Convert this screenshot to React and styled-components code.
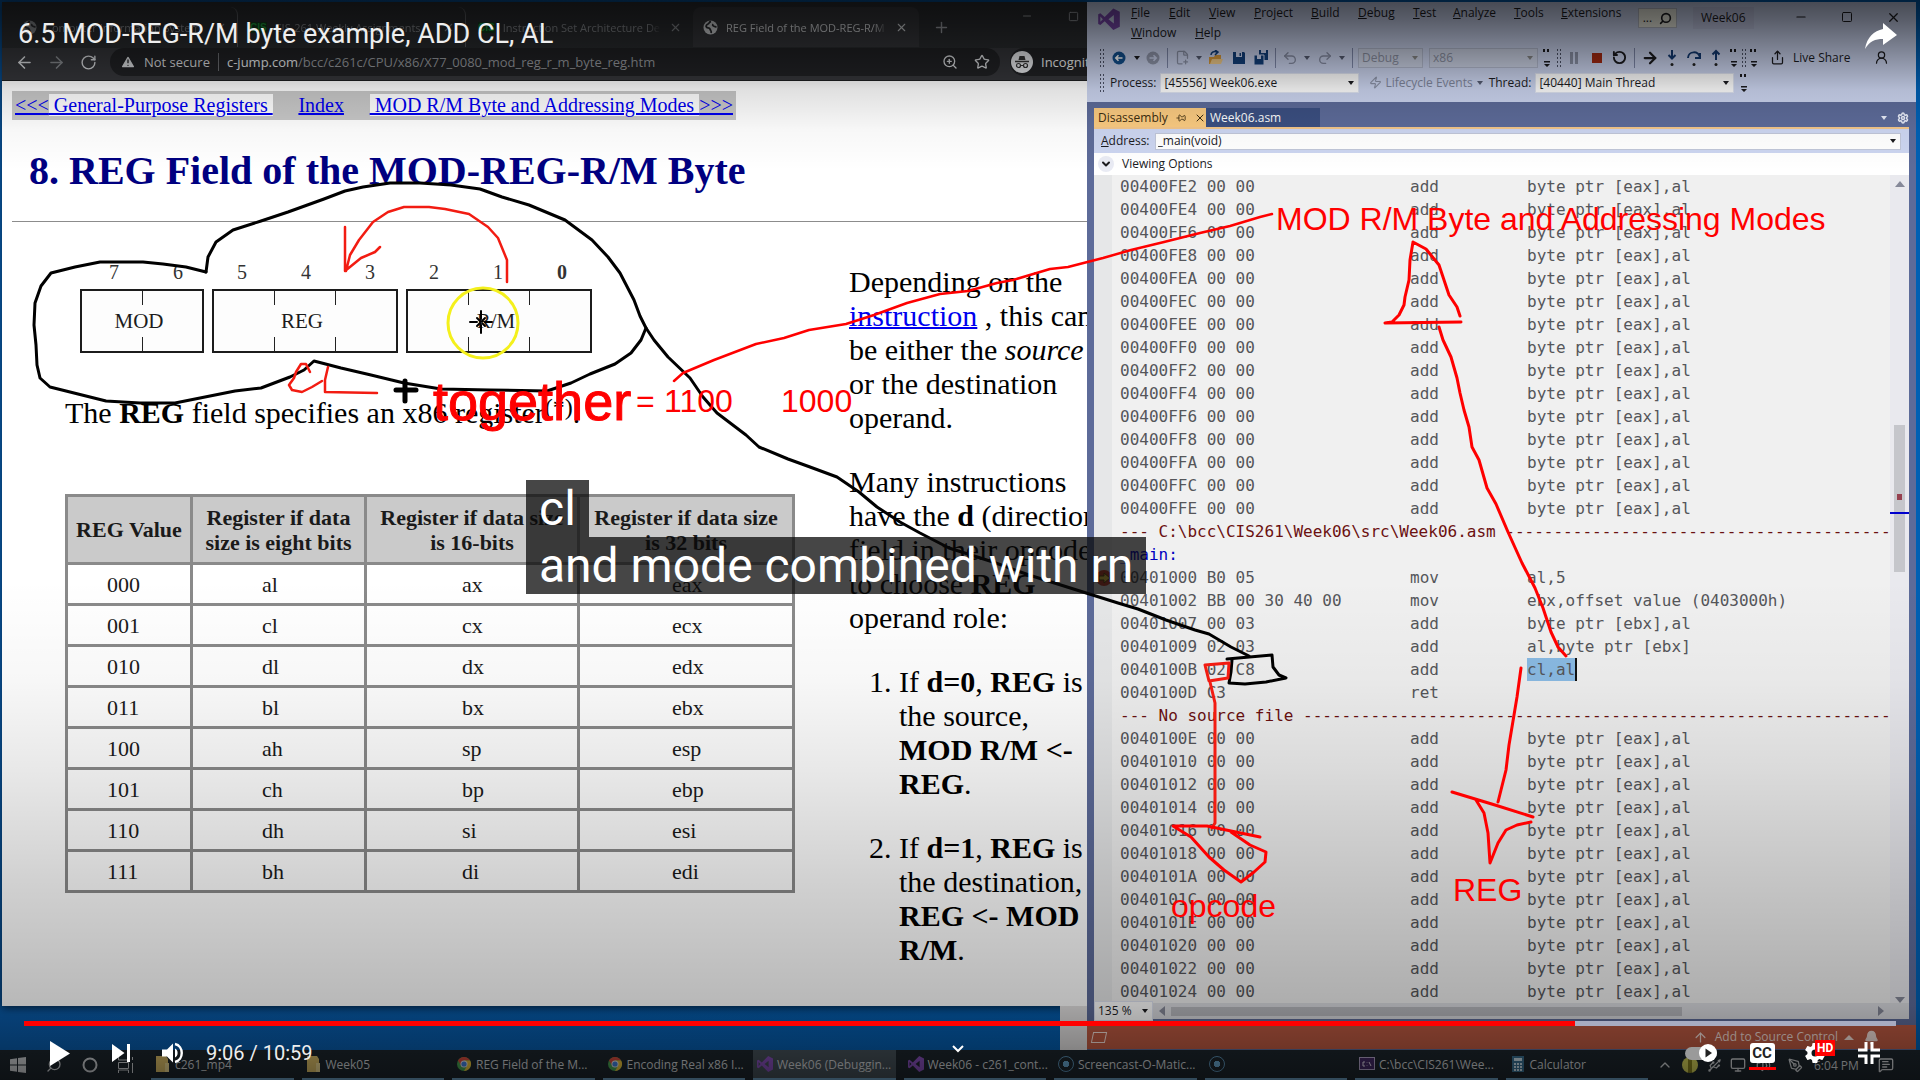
import React from "react";
import styled, { createGlobalStyle } from "styled-components";
import {
  ArrowLeft, ArrowRight, RotateCw, TriangleAlert, ZoomIn, Star, X, Plus, Minus, Square,
  Undo2, Redo2, Search, Pin, Settings, ChevronUp, ChevronDown, Share, MessageSquareText,
  Monitor, Usb, PenTool, Volume2, UserRound, Bell, ArrowUp, FilePlus2, Zap,
} from "lucide-react";

const ui = `"Open Sans", "Noto Sans", sans-serif`;
const serif = `"Liberation Serif", "Times New Roman", serif`;
const arial = `"Liberation Sans", Arial, sans-serif`;
const roboto = `Roboto, "Liberation Sans", sans-serif`;
const mono = `"DejaVu Sans Mono", monospace`;

const Global = createGlobalStyle`
  *, *::before, *::after { box-sizing: border-box; }
  body { margin: 0; overflow: hidden; background: #00427f; }
  button, select, input { font: inherit; color: inherit; margin: 0; padding: 0; border: 0; background: none; border-radius: 0; }
  svg { display: block; flex: none; }
`;

/* ---------- stage ---------- */
const Stage = styled.main`
  position: relative;
  display: grid;
  grid-template-rows: minmax(0, 1fr) 30px;
  height: 100vh;
  font-family: ${ui};
`;
const Desktop = styled.div`
  display: grid;
  grid-template-columns: minmax(0, 1085fr) minmax(0, 829fr);
  padding: 2px 4px 0 2px;
  background: linear-gradient(90deg, #0a5cab 0, #0060b4 100%);
  min-height: 0;
`;
const Layer = styled.div`
  position: absolute;
  inset: 0;
  pointer-events: none;
`;
const Shade = styled(Layer)`
  background:
    linear-gradient(180deg, rgba(0,0,0,.66) 0, rgba(0,0,0,.56) 20px, rgba(0,0,0,.38) 50px, rgba(0,0,0,.12) 90px, rgba(0,0,0,.03) 130px, transparent 170px),
    linear-gradient(0deg, rgba(0,0,0,.55) 0, rgba(0,0,0,.4) 35px, rgba(0,0,0,.28) 75px, rgba(0,0,0,.19) 190px, rgba(0,0,0,.09) 310px, rgba(0,0,0,.03) 400px, transparent 500px);
`;

/* ---------- browser ---------- */
const BrowserColumn = styled.div`
  display: flex;
  flex-direction: column;
  min-height: 0;
`;
const Browser = styled.section`
  flex: 1;
  min-height: 0;
  display: flex;
  flex-direction: column;
  overflow: hidden;
  background: #fff;
  box-shadow: 0 2px 8px rgba(0, 0, 0, .6);
`;
const Peek = styled.div`
  align-self: flex-end;
  width: 27px;
  height: 44px;
  background: #e4e2e2;
`;
const TabStrip = styled.div`
  display: flex;
  align-items: center;
  height: 46px;
  padding: 4px 0 0 8px;
  background: #2a2c2f;
  color: #9a9da2;
`;
const Tab = styled.div`
  display: flex;
  align-items: center;
  gap: 8px;
  width: ${p => p.$w}px;
  height: 40px;
  padding: 0 10px 0 ${p => (p.$active ? 10 : 12)}px;
  border-radius: 8px 8px 0 0;
  font-size: 11px;
  color: ${p => (p.$active ? "#d6d8db" : "#85888c")};
  background: ${p => (p.$active ? "#35363a" : "transparent")};
  border-right: 1px solid ${p => (p.$line ? "#5a5c60" : "transparent")};
`;
const TabText = styled.span`
  flex: 1;
  min-width: 0;
  overflow: hidden;
  white-space: nowrap;
  mask-image: linear-gradient(90deg, #000 92%, transparent);
`;
const SiteBadge = styled.b`
  font: 700 10px ${arial};
  color: #1d9a3c;
  background: #123a1c;
`;
const IconButton = styled.button`
  display: flex;
  align-items: center;
  justify-content: center;
  flex: none;
  width: ${p => p.$w || 32}px;
  height: ${p => p.$h || 28}px;
  color: ${p => p.$c || "inherit"};
`;
const WindowButtons = styled.div`
  display: flex;
  align-self: flex-start;
  margin-left: auto;
  margin-right: ${p => (p.$tucked ? -9 : 0)}px;
`;
const Toolbar = styled.div`
  display: flex;
  align-items: center;
  height: 33px;
  padding: 0 0 4px 6px;
  background: #35363a;
  border-bottom: 1px solid #1c1d1f;
  color: #d8dadd;
  font-size: 13px;
`;
const AddressPill = styled.div`
  display: flex;
  align-items: center;
  flex: 1;
  height: 28px;
  margin: 0 10px 0 6px;
  padding: 0 2px 0 10px;
  border-radius: 14px;
  background: #202124;
`;
const Secure = styled.span`
  padding: 0 8px 0 8px;
  margin-right: 8px;
  border-right: 1px solid #6a6c70;
  line-height: 18px;
`;
const Url = styled.div`
  flex: 1;
  color: #96999e;
  white-space: nowrap;
  b { font-weight: 400; color: #eceef0; }
`;
const Incognito = styled.div`
  display: flex;
  align-items: center;
  gap: 8px;
  width: 77px;
  height: 28px;
  padding-left: 1px;
  border-radius: 14px 0 0 14px;
  background: #202124;
  overflow: hidden;
  color: #f0f1f2;
`;

/* ---------- page ---------- */
const Page = styled.article`
  flex: 1;
  min-height: 0;
  padding: 10px 0 0 10px;
  overflow: hidden;
  font-family: ${serif};
  color: #000;
`;
const PageNav = styled.nav`
  display: flex;
  align-items: center;
  justify-content: space-between;
  width: 724px;
  height: 29px;
  padding: 0 3px;
  font-size: 20px;
  line-height: 23px;
  background: #c8c8c8;
`;
const PageLink = styled.a`
  color: #0000ee;
  text-decoration: underline;
  text-decoration-thickness: 2px;
  white-space: pre;
  span { background: #fff; }
`;
const Heading = styled.h1`
  margin: 29px 0 28px 17px;
  font-size: 40px;
  line-height: 44px;
  color: #000080;
`;
const Rule = styled.hr`
  margin: 0;
  border: 0;
  border-top: 1px solid #8c8c8c;
`;
const Columns = styled.div`
  display: grid;
  grid-template-columns: minmax(0, 837fr) minmax(0, 238fr);
  font-size: 30px;
  line-height: 34px;
`;
const LeftColumn = styled.div`
  padding: 38px 57px 0 53px;
`;
const Bits = styled.div`
  display: grid;
  grid-template-columns: repeat(8, 64px);
  margin-left: 17px;
  font-size: 20px;
  line-height: 24px;
  text-align: center;
  color: #333;
`;
const Fields = styled.div`
  display: flex;
  gap: 8px;
  margin: 5px 0 0 15px;
`;
const tick = "linear-gradient(#222, #222) no-repeat";
const Field = styled.div`
  display: flex;
  align-items: center;
  justify-content: center;
  width: ${p => p.$bits * 62}px;
  height: 64px;
  padding-right: 6px;
  border: 2px solid #1c1c1c;
  font-size: 21px;
  color: #1c1c1c;
  background: ${p => (p.$bits === 2
    ? `${tick} 50% 0 / 1px 14px, ${tick} 50% 100% / 1px 14px, #fdfdfd`
    : `${tick} 33.3% 0 / 1px 14px, ${tick} 66.7% 0 / 1px 14px, ${tick} 33.3% 100% / 1px 14px, ${tick} 66.7% 100% / 1px 14px, #fdfdfd`)};
`;
const Lead = styled.p`
  margin: 43px 0 0;
  white-space: nowrap;
  sup { font-size: 24px; line-height: 0; vertical-align: 8px; }
`;
const Registers = styled.table`
  width: 100%;
  margin-top: 64px;
  border-collapse: collapse;
  table-layout: fixed;
  border: 3px solid #8a8a8a;
  font-size: 22px;
  line-height: 25px;
  color: #1a1a1a;
  th, td { border: 3px solid #8a8a8a; padding: 0; }
  th { height: 68px; background: #cacaca; text-align: center; }
  td { height: 41px; text-align: left; }
  td:nth-child(1) { padding-left: 39px; }
  td:nth-child(2) { padding-left: 69px; }
  td:nth-child(3) { padding-left: 95px; }
  td:nth-child(4) { padding-left: 92px; }
`;
const RightColumn = styled.div`
  padding-top: 43px;
  white-space: nowrap;
  overflow: hidden;
  p { margin: 0 0 30px; }
  ol { margin: 0; padding-left: 50px; }
  li { margin-bottom: 30px; }
`;

/* ---------- Visual Studio ---------- */
const Studio = styled.section`
  display: flex;
  flex-direction: column;
  min-width: 0;
  min-height: 0;
  overflow: hidden;
  background: #5d6b99;
  color: #1b1b1f;
  font-size: 12px;
  line-height: 16px;
`;
const Shell = styled.header`
  height: 100px;
  flex: none;
  background: #ccd5f0;
`;
const TitleRow = styled.div`
  display: flex;
  height: 43px;
  padding: 1px 0 0 11px;
`;
const Menus = styled.nav`
  display: flex;
  flex-wrap: wrap;
  align-content: flex-start;
  width: 524px;
`;
const MenuButton = styled.button`
  width: ${p => p.$w}px;
  height: 20px;
  padding-left: 11px;
  text-align: left;
  white-space: nowrap;
  &::first-letter { text-decoration: underline; }
`;
const SearchBox = styled.button`
  display: flex;
  align-items: center;
  justify-content: space-around;
  width: 39px;
  height: 20px;
  margin: 5px 16px 0 -6px;
  background: #f0f0e4;
  border: 1px solid #b9bdc8;
`;
const Solution = styled.span`
  height: 22px;
  padding: 3px 8px;
  margin-top: 4px;
  background: #c4cae6;
`;
const ToolRow = styled.div`
  display: flex;
  align-items: center;
  height: ${p => p.$h || 25}px;
  padding-left: 12px;
  white-space: nowrap;
`;
const Grip = styled.i`
  flex: none;
  width: 6px;
  height: 20px;
  background: radial-gradient(circle, #4d5368 1px, transparent 1px) 0 0 / 3px 4px;
`;
const Divider = styled.i`
  flex: none;
  width: 1px;
  height: 20px;
  margin: 0 ${p => p.$m || 3}px;
  background: #7f89ab;
`;
const Caret = styled.i`
  flex: none;
  width: 6px;
  margin: 0 ${p => p.$m || 2}px;
  border: 3px solid transparent;
  border-top: 4px solid ${p => p.$c || "#1b1b1f"};
  border-bottom: 0;
`;
const CaretUp = styled.i`
  border: 5px solid transparent;
  border-bottom: 5px solid #f2ded8;
  border-top: 0;
`;
const Picker = styled.span`
  position: relative;
  display: flex;
  align-items: center;
  flex: none;
  width: ${p => p.$w}px;
  height: 20px;
  margin-right: ${p => p.$mr || 0}px;
  color: ${p => (p.$dim ? "#8b90a2" : "#1b1b1f")};
  background: ${p => (p.$dim ? "#ced5e8" : "#fff")};
  border: 1px solid ${p => (p.$dim ? "#b4bbd0" : "#dfe4f2")};
  select { appearance: none; width: 100%; padding-left: 3px; outline: 0; }
  i { position: absolute; right: 2px; }
`;
const Text = styled.label`
  margin: 0 ${p => p.$r || 0}px 0 ${p => p.$l || 0}px;
  color: ${p => p.$c || "inherit"};
`;
const DocTabs = styled.div`
  display: flex;
  align-items: stretch;
  height: 19px;
  margin: 6px 7px 0;
`;
const DocTab = styled.button`
  display: flex;
  align-items: center;
  gap: 8px;
  width: ${p => p.$w}px;
  padding: 0 4px;
  color: ${p => (p.$active ? "#3c2c10" : "#fff")};
  background: ${p => (p.$active ? "#fbcb81" : "#3b4f81")};
`;
const SidewaysPin = styled(Pin)`
  transform: rotate(90deg);
`;
const DocTools = styled.div`
  display: flex;
  align-items: center;
  gap: 8px;
  margin-left: auto;
  color: #e8ecf8;
`;
const Document = styled.div`
  flex: 1;
  display: flex;
  flex-direction: column;
  min-height: 0;
  margin: 0 7px;
  background: #f0f0f0;
  border-top: 2px solid #f3c68a;
`;
const AddressRow = styled.div`
  display: flex;
  align-items: center;
  gap: 5px;
  height: 24px;
  padding: 0 8px 0 7px;
  background: #ccd5f0;
  label::first-letter { text-decoration: underline; }
  label { display: block; }
`;
const AddressBox = styled.div`
  display: flex;
  align-items: center;
  flex: 1;
  height: 17px;
  background: #fff;
  border: 1px solid #c0c6d8;
`;
const AddressInput = styled.input`
  flex: 1;
  min-width: 0;
  padding: 0 2px;
  outline: 0;
`;
const OptionsRow = styled.button`
  display: flex;
  align-items: center;
  gap: 8px;
  height: 22px;
  flex: none;
  padding-left: 4px;
  background: #fff;
  svg { background: #e9ebf4; border-radius: 50%; padding: 2px; }
`;
const Editor = styled.div`
  flex: 1;
  min-height: 0;
  display: grid;
  grid-template-columns: 18px minmax(0, 1fr) 19px;
  overflow: hidden;
`;
const Gutter = styled.div`
  background: #e6e7e8;
  padding-top: 394px;
`;
const Listing = styled.div`
  overflow: hidden;
  padding-left: 8px;
  font-family: ${mono};
  font-size: 16px;
  line-height: 23px;
  color: #55565a;
  white-space: pre;
`;
const CodeLine = styled.div`
  display: grid;
  grid-template-columns: 290px 117px 1fr;
  height: 23px;
`;
const Note = styled.div`
  height: 23px;
  overflow: hidden;
  color: ${p => (p.$label ? "#0000c0" : "#6b1010")};
`;
const Marked = styled.mark`
  color: inherit;
  background: #8abbe4;
  border-right: 2px solid #111;
  padding: 2px 0;
`;
const ScrollTrack = styled.div`
  display: flex;
  flex-direction: column;
  align-items: center;
  padding-top: 6px;
  background: #e9e9ee;
`;
const ScrollArrow = styled.i`
  border: 5px solid transparent;
  ${p => (p.$dir === "up" ? "border-bottom: 6px solid #868999; border-top: 0;" : "")}
  ${p => (p.$dir === "down" ? "border-top: 6px solid #868999; border-bottom: 0;" : "")}
  ${p => (p.$dir === "left" ? "border-right: 6px solid #868999; border-left: 0;" : "")}
  ${p => (p.$dir === "right" ? "border-left: 6px solid #868999; border-right: 0;" : "")}
`;
const Thumb = styled.div`
  display: flex;
  flex-direction: column;
  align-items: center;
  width: 11px;
  height: 147px;
  margin: 238px 0 auto;
  padding-top: 69px;
  background: #c5c6cb;
`;
const MarkRed = styled.i`
  flex: none;
  width: 5px;
  height: 6px;
  background: #96404f;
`;
const MarkBlue = styled.i`
  flex: none;
  width: 19px;
  height: 2px;
  margin-top: 12px;
  background: #0000cd;
`;
const ZoomRow = styled.div`
  display: flex;
  align-items: center;
  height: 16px;
  flex: none;
  background: #dcdde2;
  padding-right: 25px;
`;
const HThumb = styled.div`
  flex: 0 1 511px;
  height: 9px;
  margin: 0 auto 0 6px;
  background: #b9bac0;
`;
const StatusBar = styled.footer`
  display: flex;
  align-items: center;
  height: 24px;
  flex: none;
  margin: 6px 0 1px;
  padding: 0 28px 0 5px;
  color: #f2ded8;
  background: #bd5a42;
`;
const Skew = styled.i`
  width: 14px;
  height: 11px;
  margin-right: auto;
  border: 1px solid #f2ded8;
  transform: skewX(-12deg);
`;

/* ---------- taskbar ---------- */
const Taskbar = styled.footer`
  display: flex;
  align-items: stretch;
  background: #1d262d;
  color: #d3d6d9;
  font-size: 12px;
`;
const Starters = styled.div`
  display: grid;
  grid-template-columns: repeat(4, 36px);
  width: 147px;
`;
const TaskGrid = styled.div`
  display: grid;
  grid-template-columns: repeat(10, minmax(0, 1fr));
  width: 1505px;
`;
const Task = styled.button`
  display: flex;
  align-items: center;
  gap: 4px;
  margin: 0 4px;
  padding-left: 4px;
  text-align: left;
  white-space: nowrap;
  border-bottom: 2px solid #6fa3c8;
  background: ${p => (p.$active ? "#46525a" : "transparent")};
`;
const Tray = styled.div`
  display: flex;
  flex: 1;
  align-items: center;
`;
const Yellow = styled.i`
  width: 16px;
  height: 16px;
  border-radius: 50%;
  background: linear-gradient(90deg, #d8d55a 40%, #8a8420 40% 60%, #d8d55a 60%);
`;
const Ring = styled.i`
  width: 16px;
  height: 16px;
  border: 1px solid #5c93b8;
  border-radius: 50%;
  background: radial-gradient(circle, #6aa9d2 3px, transparent 3px);
`;
const Clock = styled.time`
  width: 60px;
  white-space: nowrap;
`;

/* ---------- drawings and player ---------- */
const Scribble = styled.span`
  position: absolute;
  left: ${p => p.$x}px;
  top: ${p => p.$y}px;
  font: ${p => p.$s}px/40px ${arial};
  white-space: pre;
  color: #f00;
  -webkit-text-stroke: ${p => (p.$heavy ? 1 : 0)}px #f00;
`;
const Ink = styled.svg`
  width: 100%;
  height: 100%;
  fill: none;
  stroke-linecap: round;
  stroke-linejoin: round;
`;
const Captions = styled.div`
  position: absolute;
  left: 526px;
  top: 480px;
  display: flex;
  flex-direction: column;
  align-items: flex-start;
  font: 48px/57px ${roboto};
  color: #fff;
  span { padding: 0 13px; background: rgba(8, 8, 8, .75); white-space: nowrap; }
`;
const Player = styled(Layer)`
  display: flex;
  flex-direction: column;
  justify-content: space-between;
  color: #eee;
  font-family: ${roboto};
`;
const PlayerTop = styled.div`
  display: flex;
  justify-content: space-between;
  padding: 18px 22px 0 18px;
`;
const VideoTitle = styled.h2`
  margin: 0;
  font-size: 27px;
  font-weight: 400;
  line-height: 32px;
`;
const Seek = styled.input`
  appearance: none;
  display: block;
  width: calc(100% - 48px);
  height: 5px;
  margin: 0 24px;
  background: linear-gradient(90deg, #f00 82.85%, #a7abc0 82.85%);
  &::-webkit-slider-thumb { appearance: none; width: 0; height: 0; }
`;
const Controls = styled.div`
  display: grid;
  grid-template-columns: 1fr auto 1fr;
  height: 54px;
  padding: 0 29px 0 24px;
`;
const Cluster = styled.div`
  display: flex;
  align-items: center;
  justify-content: ${p => (p.$end ? "flex-end" : "flex-start")};
`;
const Time = styled.span`
  padding-left: 7px;
  font-size: 20px;
  line-height: 24px;
`;
const CC = styled.b`
  position: relative;
  width: 25px;
  border-radius: 3px;
  font: 700 15px/20px ${roboto};
  color: #222;
  background: #fff;
  &::after { content: ""; position: absolute; left: -1px; right: -1px; bottom: -7px; height: 3px; background: #f00; }
`;
const GearWrap = styled.span`
  position: relative;
  display: block;
`;
const HD = styled.b`
  position: absolute;
  left: 12px;
  top: -1px;
  padding: 0 2px;
  font: 700 12px/16px ${roboto};
  color: #fff;
  background: #f00;
`;
const Toggle = styled.span`
  display: flex;
  align-items: center;
  justify-content: flex-end;
  width: 32px;
  height: 13px;
  border-radius: 7px;
  background: #9a9a9a;
`;

const GlobeIcon = () => (
  <svg width="15" height="15" viewBox="0 0 15 15">
    <circle cx="7.500" cy="7.500" r="7" fill="currentColor" />
    <path d="M8 1.500c-2 .3-1.600 2-3 2.500S2.500 6 3.500 7.200 6.500 7 7 9s1.600 1.200 1.200 4.200M10 4c-1 1.500.5 2.600 3.500 3" stroke="#2a2c2f" strokeWidth="1.800" fill="none" />
  </svg>
);
const VsLogo = ({ s = 20, c = "#7a4fb5" }) => (
  <svg width={s} height={s} viewBox="0 0 20 20" fill={c}>
    <path d="M14 0 20 3v14l-6 3L6 12l-4 3.400L0 14.500v-9L2 4.600 6 8zM14.500 6 9.500 10l5 4zM2 7.600v4.800L4.300 10z" fillRule="evenodd" />
  </svg>
);
const ChromeLogo = () => (
  <svg width="16" height="16" viewBox="0 0 16 16">
    <circle cx="8" cy="8" r="7" fill="#4aa853" />
    <path d="M8 1a7 7 0 0 1 6.100 3.500H8L5 9.200 2 4.500A7 7 0 0 1 8 1z" fill="#dd4b3e" />
    <path d="M14.100 4.500A7 7 0 0 1 8 15l3.100-5.200L8 4.500z" fill="#f0c63c" />
    <circle cx="8" cy="8" r="3.500" fill="#eee" /><circle cx="8" cy="8" r="2.600" fill="#4484e4" />
  </svg>
);
const Folder = () => (
  <svg width="16" height="18" viewBox="0 0 16 18"><path d="M1 1h10l2 3v13H1z" fill="#e0c26a" /><path d="M10 8h4v9h-4z" fill="#f2dd94" /></svg>
);
const Console = () => (
  <svg width="16" height="14" viewBox="0 0 16 14"><rect x=".5" y=".5" width="15" height="12" fill="#442a68" stroke="#b7a9cf" /><path d="M6 5H4v4h2M8 5.500v.500M8 8.500V9M10 5l2 4" stroke="#e8e2f2" fill="none" /></svg>
);
const Calc = () => (
  <svg width="16" height="18" viewBox="0 0 16 18"><rect x="2" y="1" width="12" height="16" fill="#3b7496" /><path d="M4 3h8v3H4z" fill="#cfe4ef" /><path d="M4 9h8M4 12h8M4 15h8" stroke="#cfe4ef" strokeWidth="2" strokeDasharray="2 1" /></svg>
);
const Arrow = ({ d }) => (
  <svg width="16" height="18" viewBox="0 0 16 18" fill="none" stroke="#123a73" strokeWidth="2">
    {d}<circle cx="8" cy="15.500" r="1.500" fill="#222" stroke="none" />
  </svg>
);
const Overflow = ({ w = 18 }) => (
  <IconButton $w={w} $h={22} aria-label="Toolbar options">
    <svg width="8" height="20" viewBox="0 0 8 20" fill="#1b1b1f"><path d="M0 1h2v3H0zM4 1h2v3H4zM1 13h6v1.500H1zM1 16h6l-3 3z" /></svg>
  </IconButton>
);

const MENUS = [["File", 38], ["Edit", 40], ["View", 45], ["Project", 57], ["Build", 47], ["Debug", 55], ["Test", 40], ["Analyze", 61], ["Tools", 47], ["Extensions", 80], ["Window", 64], ["Help", 50]];

const plain = a => [`${a} 00 00`, "add", "byte ptr [eax],al"];
const BEFORE = ["00400FE2", "00400FE4", "00400FE6", "00400FE8", "00400FEA", "00400FEC", "00400FEE", "00400FF0", "00400FF2", "00400FF4", "00400FF6", "00400FF8", "00400FFA", "00400FFC", "00400FFE"].map(plain);
const MAIN = [
  ["00401000 B0 05", "mov", "al,5"],
  ["00401002 BB 00 30 40 00", "mov", "ebx,offset value (0403000h)"],
  ["00401007 00 03", "add", "byte ptr [ebx],al"],
  ["00401009 02 03", "add", "al,byte ptr [ebx]"],
  ["0040100B 02 C8", "add", "cl,al", true],
  ["0040100D C3", "ret", ""],
];
const AFTER = ["0040100E", "00401010", "00401012", "00401014", "00401016", "00401018", "0040101A", "0040101C", "0040101E", "00401020", "00401022", "00401024"].map(plain);
const REGS = [["000", "al", "ax", "eax"], ["001", "cl", "cx", "ecx"], ["010", "dl", "dx", "edx"], ["011", "bl", "bx", "ebx"], ["100", "ah", "sp", "esp"], ["101", "ch", "bp", "ebp"], ["110", "dh", "si", "esi"], ["111", "bh", "di", "edi"]];

const Code = ({ rows }) => rows.map(([a, op, arg, hit]) => (
  <CodeLine key={a}><span>{a}</span><span>{op}</span><span>{hit ? <Marked>{arg}</Marked> : arg}</span></CodeLine>
));

function BrowserWindow() {
  return (
    <BrowserColumn>
      <Browser>
        <TabStrip>
          <Tab $w={228} $line><GlobeIcon /><TabText>Computer Information System</TabText><X size={13} /></Tab>
          <Tab $w={228} $line><SiteBadge>CIS</SiteBadge><TabText>CIS-261 Weekly Assignments</TabText><X size={13} /></Tab>
          <Tab $w={227}><SiteBadge>CIS</SiteBadge><TabText>Instruction Set Architecture De</TabText><X size={13} /></Tab>
          <Tab $w={226} $active><GlobeIcon /><TabText>REG Field of the MOD-REG-R/M</TabText><X size={13} /></Tab>
          <IconButton $w={44} aria-label="New tab"><Plus size={17} /></IconButton>
          <WindowButtons $tucked>
            <IconButton $w={46} $h={20} aria-label="Minimize"><Minus size={12} /></IconButton>
            <IconButton $w={46} $h={20} aria-label="Maximize"><Square size={11} /></IconButton>
          </WindowButtons>
        </TabStrip>
        <Toolbar>
          <IconButton aria-label="Back"><ArrowLeft size={19} /></IconButton>
          <IconButton $c="#85888c" aria-label="Forward"><ArrowRight size={19} /></IconButton>
          <IconButton aria-label="Reload"><RotateCw size={17} /></IconButton>
          <AddressPill>
            <TriangleAlert size={16} fill="#d8dadd" stroke="#202124" />
            <Secure>Not secure</Secure>
            <Url><b>c-jump.com</b>/bcc/c261c/CPU/x86/X77_0080_mod_reg_r_m_byte_reg.htm</Url>
            <IconButton aria-label="Zoom"><ZoomIn size={16} /></IconButton>
            <IconButton aria-label="Bookmark"><Star size={16} /></IconButton>
          </AddressPill>
          <Incognito>
            <svg width="22" height="22" viewBox="0 0 22 22"><circle cx="11" cy="11" r="11" fill="#e8eaed" /><path d="M7.500 9 8.500 5h5l1 4z" fill="#333" /><path d="M4 10.500h14" stroke="#333" strokeWidth="1.400" /><g fill="none" stroke="#333" strokeWidth="1.200"><circle cx="7.500" cy="14.500" r="2" /><circle cx="14.500" cy="14.500" r="2" /><path d="M9.500 14.500h3" /></g></svg>
            <span>Incognito</span>
          </Incognito>
        </Toolbar>
        <Page>
          <PageNav>
            <PageLink href="#registers">&lt;&lt;&lt;<span> General-Purpose Registers </span></PageLink>
            <PageLink href="#index">Index</PageLink>
            <PageLink href="#modes"><span> MOD R/M Byte and Addressing Modes </span>&gt;&gt;&gt;</PageLink>
          </PageNav>
          <Heading>8. REG Field of the MOD-REG-R/M Byte</Heading>
          <Rule />
          <Columns>
            <LeftColumn>
              <Bits>{[7, 6, 5, 4, 3, 2, 1].map(n => <span key={n}>{n}</span>)}<b>0</b></Bits>
              <Fields>
                <Field $bits={2}>MOD</Field>
                <Field $bits={3}>REG</Field>
                <Field $bits={3}>R/M</Field>
              </Fields>
              <Lead>The <b>REG</b> field specifies an x86 register<sup>(*)</sup>.</Lead>
              <Registers>
                <colgroup><col width="125" /><col width="174" /><col width="213" /><col width="215" /></colgroup>
                <thead><tr><th>REG Value</th><th>Register if data<br />size is eight bits</th><th>Register if data size<br />is 16-bits</th><th>Register if data size<br />is 32 bits</th></tr></thead>
                <tbody>{REGS.map(r => <tr key={r[0]}>{r.map(c => <td key={c}>{c}</td>)}</tr>)}</tbody>
              </Registers>
            </LeftColumn>
            <RightColumn>
              <p>Depending on the<br /><PageLink href="#instruction">instruction</PageLink> , this can<br />be either the <i>source</i><br />or the destination<br />operand.</p>
              <p>Many instructions<br />have the <b>d</b> (direction)<br />field in their opcode<br />to choose <b>REG</b><br />operand role:</p>
              <ol>
                <li>If <b>d=0</b>, <b>REG</b> is<br />the source,<br /><b>MOD R/M &lt;-<br />REG</b>.</li>
                <li>If <b>d=1</b>, <b>REG</b> is<br />the destination,<br /><b>REG &lt;- MOD<br />R/M</b>.</li>
              </ol>
            </RightColumn>
          </Columns>
        </Page>
      </Browser>
      <Peek />
    </BrowserColumn>
  );
}

function StudioWindow() {
  const navy = "#12407c";
  return (
    <Studio>
      <Shell>
        <TitleRow>
          <svg width="22" height="27" viewBox="0 -5 20 25"><path d="M14 0 20 3v14l-6 3L6 12l-4 3.400L0 14.500v-9L2 4.600 6 8zM14.500 6 9.500 10l5 4zM2 7.600v4.800L4.300 10z" fill="#7b48b0" fillRule="evenodd" /></svg>
          <Menus>{MENUS.map(([m, w]) => <MenuButton key={m} $w={w}>{m}</MenuButton>)}</Menus>
          <SearchBox aria-label="Search">...<Search size={13} strokeWidth={3} transform="scale(-1 1)" /></SearchBox>
          <Solution>Week06</Solution>
          <WindowButtons>
            <IconButton $w={46} aria-label="Minimize"><Minus size={14} /></IconButton>
            <IconButton $w={46} aria-label="Maximize"><Square size={12} /></IconButton>
            <IconButton $w={46} aria-label="Close"><X size={15} /></IconButton>
          </WindowButtons>
        </TitleRow>
        <ToolRow>
          <Grip />
          <IconButton $w={28} $c={navy} aria-label="Navigate back"><svg width="14" height="14" viewBox="0 0 14 14"><circle cx="7" cy="7" r="6.500" fill="#12508f" /><path d="M10.500 7H4M6.500 4.300 3.800 7l2.700 2.700" stroke="#fff" strokeWidth="1.600" fill="none" /></svg></IconButton>
          <Caret $m={1} />
          <IconButton $w={24} aria-label="Navigate forward"><svg width="14" height="14" viewBox="0 0 14 14"><circle cx="7" cy="7" r="6.500" fill="#9299ae" /><path d="M3.500 7H10M7.500 4.300 10.200 7 7.500 9.700" stroke="#ccd5f0" strokeWidth="1.600" fill="none" /></svg></IconButton>
          <Divider $m={2} />
          <IconButton $w={24} $c="#8c93a8" aria-label="New project"><FilePlus2 size={15} /></IconButton>
          <Caret $c="#555c72" />
          <IconButton $w={24} aria-label="Open"><svg width="16" height="16" viewBox="0 0 16 16"><path d="M1 14V7h5l1-2h6v9z" fill="#d99a3a" /><path d="M2 14l2-5h11l-2 5z" fill="#f3cd8a" /><path d="M3 5c0-3 3-4 6-3M7 0l3 2-3 3" stroke={navy} fill="none" strokeWidth="1.500" /></svg></IconButton>
          <IconButton $w={22} aria-label="Save"><svg width="14" height="14" viewBox="0 0 14 14"><path d="M1 1h11l1 1v11H1z" fill={navy} /><path d="M4 1h6v5H4z" fill="#ccd5f0" /><path d="M7.500 2H9v3H7.500z" fill={navy} /></svg></IconButton>
          <IconButton $w={22} aria-label="Save all"><svg width="16" height="16" viewBox="0 0 16 16"><path d="M6 0h9v10H6z" fill={navy} /><path d="M8 0h5v3H8z" fill="#ccd5f0" /><path d="M1 5h10v10H1z" fill={navy} stroke="#ccd5f0" /><path d="M4 5h4v4H4z" fill="#ccd5f0" /></svg></IconButton>
          <Divider />
          <IconButton $w={22} $c="#868da4" aria-label="Undo"><Undo2 size={16} /></IconButton>
          <Caret $m={3} $c="#555c72" />
          <IconButton $w={24} $c="#868da4" aria-label="Redo"><Redo2 size={16} /></IconButton>
          <Caret $c="#555c72" />
          <Divider $m={5} />
          <Picker $w={65} $mr={6} $dim><select aria-label="Configuration"><option>Debug</option></select><Caret $c="#888" /></Picker>
          <Picker $w={109} $dim><select aria-label="Platform"><option>x86</option></select><Caret $c="#888" /></Picker>
          <Overflow />
          <Grip />
          <IconButton $w={24} $c="#8c93a8" aria-label="Break all"><svg width="10" height="14" viewBox="0 0 10 14" fill="#8c93a8"><path d="M1 1h3v12H1zM6 1h3v12H6z" /></svg></IconButton>
          <IconButton $w={22} aria-label="Stop"><svg width="10" height="10"><rect width="10" height="10" fill="#a52a12" /></svg></IconButton>
          <IconButton $w={22} aria-label="Restart"><RotateCw size={15} strokeWidth={3} transform="scale(-1 1)" /></IconButton>
          <Divider $m={4} />
          <IconButton $w={22} aria-label="Show next statement"><ArrowRight size={18} strokeWidth={3} /></IconButton>
          <IconButton $w={22} aria-label="Step into"><Arrow d={<path d="M8 1v8M4.500 6 8 9.500 11.500 6" />} /></IconButton>
          <IconButton $w={22} aria-label="Step over"><Arrow d={<path d="M2 9c0-7 11-8 12 0M14 4v5H9" />} /></IconButton>
          <IconButton $w={22} aria-label="Step out"><Arrow d={<path d="M8 11V2M4.500 5.500 8 2l3.500 3.500" />} /></IconButton>
          <Overflow w={14} /><Grip /><Overflow w={14} />
          <IconButton $w={32} aria-label="Live Share"><Share size={15} /></IconButton>
          <Text as="span">Live Share</Text>
          <IconButton $w={62} aria-label="Feedback"><UserRound size={15} /></IconButton>
        </ToolRow>
        <ToolRow $h={25}>
          <Grip />
          <Text htmlFor="process" $l={5} $r={4}>Process:</Text>
          <Picker $w={199} $mr={6}><select id="process"><option>[45556] Week06.exe</option></select><Caret /></Picker>
          <IconButton $w={20} $c="#8c93a8" aria-label="Lifecycle events"><Zap size={13} /></IconButton>
          <Text as="span" $c="#7f869c" $r={2}>Lifecycle Events</Text>
          <Caret $c="#555c72" />
          <Text htmlFor="thread" $l={4} $r={4}>Thread:</Text>
          <Picker $w={199}><select id="thread"><option>[40440] Main Thread</option></select><Caret /></Picker>
          <Overflow w={20} />
        </ToolRow>
      </Shell>
      <DocTabs>
        <DocTab $w={112} $active>Disassembly<SidewaysPin size={10} /><X size={12} /></DocTab>
        <DocTab $w={114}>Week06.asm</DocTab>
        <DocTools><Caret $c="#e8ecf8" /><Settings size={12} strokeWidth={3} /></DocTools>
      </DocTabs>
      <Document>
        <AddressRow>
          <label htmlFor="address">Address:</label>
          <AddressBox><AddressInput id="address" defaultValue="_main(void)" /><Caret $m={4} /></AddressBox>
        </AddressRow>
        <OptionsRow><ChevronDown size={16} strokeWidth={4} />Viewing Options</OptionsRow>
        <Editor>
          <Gutter>
            <svg width="18" height="18" viewBox="0 0 18 18"><circle cx="10" cy="9" r="8" fill="#c8402c" /><path d="M5 7h5V4l6 5-6 5v-3H5z" fill="#f6d24a" stroke="#5a4a10" /></svg>
          </Gutter>
          <Listing>
            <Code rows={BEFORE} />
            <Note>{"--- C:\\bcc\\CIS261\\Week06\\src\\Week06.asm " + "-".repeat(60)}</Note>
            <Note $label>_main:</Note>
            <Code rows={MAIN} />
            <Note>{"--- No source file " + "-".repeat(80)}</Note>
            <Code rows={AFTER} />
          </Listing>
          <ScrollTrack>
            <ScrollArrow $dir="up" />
            <Thumb><MarkRed /><MarkBlue /></Thumb>
            <ScrollArrow $dir="down" />
          </ScrollTrack>
        </Editor>
        <ZoomRow>
          <Picker $w={59} $mr={6}><select aria-label="Zoom"><option>135 %</option></select><Caret /></Picker>
          <ScrollArrow $dir="left" />
          <HThumb />
          <ScrollArrow $dir="right" />
        </ZoomRow>
      </Document>
      <StatusBar>
        <Skew />
        <ArrowUp size={15} />
        <Text as="span" $l={7} $r={6}>Add to Source Control</Text>
        <CaretUp />
        <IconButton $w={34} $h={20} aria-label="Notifications"><Bell size={15} fill="currentColor" /></IconButton>
      </StatusBar>
    </Studio>
  );
}

const INK = [
  ["#000", 3, "M206 272 186 267 163 264 143 262 100 262 75 267 51 273 41 286 35 303 34 325 36 345 37 365 40 378 50 387 78 394 106 401 140 403 175 403 200 398 235 391 261 388 290 377 304 370 314 361 341 368 371 375 404 383 441 389 490 390 547 391 571 383 590 374 615 364 631 353 641 340 646 328"],
  ["#000", 3, "M206 272 208 257 216 242 233 230 261 221 288 212 324 199 345 191 363 187 390 183 420 183 451 185 480 189 502 197 529 205 565 220 592 240 608 257 620 273 634 300 640 316 646 328 654 340 668 357 690 378 703 397 717 413 746 435 759 447 788 459 810 467 837 477 859 492 877 507 900 522 920 533 949 548 993 562 1029 575 1083 592 1118 603 1138 609 1166 620 1195 630 1209 634 1231 647 1249 656"],
  ["#000", 3, "M1227 659 1272 655 1273 667 1279 675 1286 678 1266 682 1245 684 1229 683 1231 672 1232 660"],
  ["#000", 5, "M396 390H416M405 381V401"],
  ["#f21c12", 2.5, "M507 282V260L498 238 488 227 469 214 445 209 429 207H404L388 212 373 222 359 240 350 255 346 271M345 227V271L361 258 375 252 380 247"],
  ["#f21c12", 2.5, "M310 372 306 364 301 364 296 372 294 378 289 385 292 390 302 392 312 387 322 381M328 367 325 380V392L377 393"],
  ["#f00", 2.5, "M674 381 683 373 714 360 756 344 784 338 809 330 846 324 874 315 907 303 940 294 968 291 997 283 1013 280 1050 269 1068 267 1103 258 1131 250 1164 242 1200 233 1230 226 1260 217 1272 214"],
  ["#f00", 3, "M1413 242 1410 260 1409 280 1405 297 1404 305 1399 315 1392 322 1385 323 1461 322M1413 242 1426 249 1439 265 1443 277 1449 295 1457 307 1460 316"],
  ["#f00", 3, "M1439 327 1443 340 1451 357 1457 378 1460 393 1464 410 1469 427 1472 447 1479 460 1487 488 1496 504 1508 532 1522 563 1535 588 1543 608 1551 632 1558 647 1566 656"],
  ["#f00", 3, "M1521 668 1517 697 1509 745 1506 770 1498 802M1452 792 1495 805 1533 817M1476 800 1484 813 1488 833 1490 863 1498 843 1506 830 1517 825 1531 822"],
  ["#f21c12", 3, "M1205 665 1229 663 1228 678 1209 681 1205 665M1210 682 1215 703 1215 823 1212 828"],
  ["#f00", 3, "M1260 837 1231 831 1207 826 1173 826 1191 837 1209 857 1224 870 1241 882 1254 872 1265 862 1266 852 1250 845 1231 832"],
];

function Drawings() {
  return (
    <Layer>
      <Ink viewBox="0 0 1920 1080" aria-hidden="true">
        {INK.map(([c, w, d]) => <path key={d} d={d} stroke={c} strokeWidth={w} />)}
        <circle cx="483" cy="323" r="35" stroke="#f4f01c" strokeWidth="3" />
        <path d="M470 322h7M485 322h7M481 311v8M481 325v8M477 318l3 3M482 323l3 3M485 318l-3 3M480 323l-3 3" stroke="#000" strokeWidth="2" />
      </Ink>
      <Scribble $x={433} $y={381} $s={54} $heavy>together</Scribble>
      <Scribble $x={636} $y={381} $s={32}>=</Scribble>
      <Scribble $x={664} $y={381} $s={32}>1100</Scribble>
      <Scribble $x={781} $y={381} $s={32}>1000</Scribble>
      <Scribble $x={1276} $y={199} $s={32}>MOD R/M Byte and Addressing Modes</Scribble>
      <Scribble $x={1171} $y={886} $s={32}>opcode</Scribble>
      <Scribble $x={1453} $y={870} $s={32}>REG</Scribble>
    </Layer>
  );
}

function PlayerChrome() {
  return (
    <Player>
      <PlayerTop>
        <VideoTitle>6.5 MOD-REG-R/M byte example, ADD CL, AL</VideoTitle>
        <IconButton $w={34} $h={36} aria-label="Share video"><svg width="32" height="26" viewBox="0 0 32 26"><path d="M18 0 32 12 18 22v-6C10 16 5 18 0 26 2 14 9 8 18 6z" fill="#fff" /></svg></IconButton>
      </PlayerTop>
      <div>
        <Seek type="range" aria-label="Seek" min="0" max="659" defaultValue="546" />
        <Controls>
          <Cluster>
            <IconButton $w={71} $h={54} aria-label="Play"><svg width="20" height="25" viewBox="0 0 20 25"><path d="M0 0 20 12.500 0 25z" fill="#fff" /></svg></IconButton>
            <IconButton $w={52} $h={54} aria-label="Next"><svg width="18" height="18" viewBox="0 0 18 18"><path d="M0 0 12.500 9 0 18zM15 0h3v18h-3z" fill="#fff" /></svg></IconButton>
            <IconButton $w={52} $h={54} aria-label="Mute"><svg width="22" height="22" viewBox="0 0 22 22"><path d="M0 7.500v7h5l6 6v-19l-6 6zM13 6.500c3.500 1.500 3.500 7.500 0 9z" fill="#fff" /><path d="M13 2c9 2 9 16 0 18" stroke="#fff" strokeWidth="2.400" fill="none" /></svg></IconButton>
            <Time>9:06 / 10:59</Time>
          </Cluster>
          <IconButton $w={30} $h={46} aria-label="More"><svg width="12" height="8" viewBox="0 0 12 8"><path d="m1 1 5 5 5-5" stroke="#fff" strokeWidth="2" fill="none" /></svg></IconButton>
          <Cluster $end>
            <IconButton $w={80} $h={54} aria-label="Autoplay"><Toggle><svg width="18" height="18" viewBox="0 0 18 18"><circle cx="9" cy="9" r="9" fill="#fff" /><path d="M6.500 4.500 13 9l-6.500 4.500z" fill="#222" /></svg></Toggle></IconButton>
            <IconButton $w={42} $h={54} aria-label="Subtitles"><CC>CC</CC></IconButton>
            <IconButton $w={64} $h={54} aria-label="Settings"><GearWrap><svg width="24" height="24" viewBox="0 0 24 24"><path d="M19.400 13c.04-.300.060-.650.060-1s-.020-.700-.070-1l2.100-1.650a.5.5 0 0 0 .120-.640l-2-3.460a.5.5 0 0 0-.610-.220l-2.490 1a7.300 7.300 0 0 0-1.730-1l-.380-2.650A.5.5 0 0 0 13.900 2h-4a.5.5 0 0 0-.490.420L9.030 5.070c-.610.250-1.170.590-1.690.980l-2.490-1a.5.5 0 0 0-.610.220l-2 3.460a.5.5 0 0 0 .120.640L4.470 11c-.040.300-.070.650-.070 1s.020.700.070 1l-2.110 1.650a.5.5 0 0 0-.120.640l2 3.460c.12.220.380.300.610.220l2.490-1c.52.400 1.080.730 1.690.980l.38 2.650c.03.240.240.420.490.420h4c.25 0 .460-.180.490-.420l.38-2.650a7.700 7.700 0 0 0 1.690-.980l2.490 1c.23.080.490 0 .610-.220l2-3.460a.5.5 0 0 0-.120-.640zM12 15.500a3.500 3.500 0 1 1 0-7 3.500 3.500 0 0 1 0 7z" fill="#fff" /></svg><HD>HD</HD></GearWrap></IconButton>
            <IconButton $w={44} $h={54} aria-label="Exit full screen"><svg width="22" height="22" viewBox="0 0 22 22"><path d="M8 0v8H0M14 0v8h8M8 22v-8H0M14 22v-8h8" stroke="#fff" strokeWidth="3" fill="none" /></svg></IconButton>
          </Cluster>
        </Controls>
      </div>
    </Player>
  );
}

export default function App() {
  return (
    <Stage>
      <Global />
      <Desktop>
        <BrowserWindow />
        <StudioWindow />
      </Desktop>
      <Taskbar>
        <Starters>
          <IconButton $w={36} $h={30} aria-label="Start"><svg width="16" height="16" viewBox="0 0 16 16" fill="#d3d6d9"><path d="M0 2.200 7 1.200v6.300H0zM8 1l8-1v7.500H8zM0 8.500h7v6.300L0 13.800zM8 8.500h8V16l-8-1z" /></svg></IconButton>
          <IconButton $w={36} $h={30} aria-label="Search"><Search size={16} transform="scale(-1 1)" /></IconButton>
          <IconButton $w={36} $h={30} aria-label="Cortana"><svg width="16" height="16" viewBox="0 0 16 16"><circle cx="8" cy="8" r="6.500" fill="none" stroke="#d3d6d9" strokeWidth="2" /></svg></IconButton>
          <IconButton $w={36} $h={30} aria-label="Task view"><svg width="16" height="16" viewBox="0 0 16 16" fill="none" stroke="#d3d6d9"><path d="M.500 5.500h10v6H.500zM.500 0v3h10V0M.500 16v-3h10v3M14.500 0v3M14.500 6v10" /></svg></IconButton>
        </Starters>
        <TaskGrid>
          <Task><Folder />c261_mp4</Task>
          <Task><Folder />Week05</Task>
          <Task><ChromeLogo />REG Field of the M...</Task>
          <Task><ChromeLogo />Encoding Real x86 I...</Task>
          <Task $active><VsLogo s={16} c="#8a52c0" />Week06 (Debuggin...</Task>
          <Task><VsLogo s={16} c="#8a52c0" />Week06 - c261_cont...</Task>
          <Task><Ring />Screencast-O-Matic...</Task>
          <Task aria-label="Recorder"><Ring /></Task>
          <Task><Console />C:\bcc\CIS261\Wee...</Task>
          <Task><Calc />Calculator</Task>
        </TaskGrid>
        <Tray>
          <IconButton $w={26} $h={30} aria-label="Hidden icons"><ChevronUp size={16} /></IconButton>
          <IconButton $w={24} $h={30} aria-label="Notes"><Yellow /></IconButton>
          <IconButton $w={24} $h={30} aria-label="Eject"><Usb size={15} /></IconButton>
          <IconButton $w={24} $h={30} aria-label="Network"><Monitor size={16} /></IconButton>
          <IconButton $w={26} $h={30} aria-label="Volume"><Volume2 size={15} /></IconButton>
          <IconButton $w={38} $h={30} aria-label="Pen"><PenTool size={15} /></IconButton>
          <Clock>6:04 PM</Clock>
          <IconButton $w={24} $h={30} aria-label="Action center"><MessageSquareText size={16} /></IconButton>
        </Tray>
      </Taskbar>
      <Shade />
      <Drawings />
      <Captions><span>cl</span><span>and mode combined with rn</span></Captions>
      <PlayerChrome />
    </Stage>
  );
}
